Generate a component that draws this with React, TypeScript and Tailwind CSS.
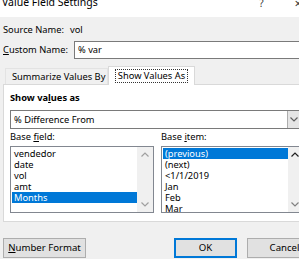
import React from "react";

const Up = ({ c = "#a0a0a0" }: { c?: string }) => (
  <svg width="8" height="5" viewBox="0 0 8 5">
    <path d="M0.5 4.5 L4 1 L7.5 4.5" fill="none" stroke={c} strokeWidth="1.2" />
  </svg>
);

const Down = ({ c = "#a0a0a0" }: { c?: string }) => (
  <svg width="8" height="5" viewBox="0 0 8 5">
    <path d="M0.5 0.5 L4 4 L7.5 0.5" fill="none" stroke={c} strokeWidth="1.2" />
  </svg>
);

const Item = ({ text, sel }: { text: string; sel?: boolean }) => (
  <div
    className={
      "h-[11px] leading-[11px] pl-[2px] " +
      (sel ? "bg-[#0078d7] text-white" : "text-black")
    }
  >
    {text}
  </div>
);

export default function App() {
  const fields = ["vendedor", "date", "vol", "amt", "Months"];
  const items = ["(previous)", "(next)", "<1/1/2019", "Jan", "Feb", "Mar"];

  return (
    <div className="w-[299px] h-[259px] overflow-hidden bg-[#f0f0f0] text-[9.3px] text-black whitespace-nowrap font-['Noto_Sans',sans-serif]">
      {/* title bar */}
      <div className="h-[17px] bg-white flex items-start overflow-hidden">
        <span className="ml-[2px] -mt-[4px] text-[10.5px] leading-[12px]">
          Value Field Settings
        </span>
        <div className="ml-auto flex items-start -mt-[3px] -mr-[3px]">
          <span className="text-[10px] leading-[12px] text-[#333]">?</span>
          <span className="ml-[31px] text-[13px] leading-[12px] text-[#333]">×</span>
        </div>
      </div>

      {/* source name */}
      <div className="h-[24px] pt-[2px] flex items-center pl-[3px]">
        <span className="w-[67px]">Source Name:</span>
        <span>vol</span>
      </div>

      {/* custom name */}
      <div className="h-[18px] flex items-center pl-[3px] overflow-hidden">
        <span className="w-[71px] shrink-0">
          <span className="underline">C</span>ustom Name:
        </span>
        <div className="h-[18px] w-[240px] shrink-0 bg-white border border-[#7a7a7a] flex items-center pl-[3px]">
          % var
        </div>
      </div>

      {/* tabs */}
      <div className="mt-[7px] h-[18px] flex items-end pl-[5px] relative z-10">
        <div className="h-[16px] w-[103px] border border-b-0 border-[#e3e3e3] bg-[#f0f0f0] flex items-center pl-[6px]">
          Summarize Values By
        </div>
        <div className="h-[19px] -mb-[1px] w-[87px] border border-b-0 border-[#d9d9d9] bg-white flex items-center justify-center">
          <span className="outline-1 outline-dotted outline-[#333] px-[2px] leading-[12px]">
            Show Values As
          </span>
        </div>
      </div>

      {/* panel */}
      <div className="ml-[3px] -mr-[10px] h-[138px] border border-[#d9d9d9] bg-white pl-[6px] pt-[7px]">
        <div className="h-[12px] leading-[12px] font-bold">
          Show va<span className="underline">l</span>ues as
        </div>
        <div className="mt-[6px] h-[19px] w-[290px] border border-[#7a7a7a] bg-white flex items-center">
          <span className="pl-[3px] flex-1">% Difference From</span>
          <div className="w-[12px] h-full bg-[#e5e5e5] border-l border-[#adadad] flex items-center justify-center">
            <Down c="#606060" />
          </div>
        </div>

        <div className="mt-[2px] flex gap-[7px]">
          <div className="w-[144px] shrink-0">
            <div className="h-[12px] leading-[12px]">
              Base <span className="underline">f</span>ield:
            </div>
            <div className="mt-[3px] h-[67px] border border-[#828790] bg-white flex pt-[1px] pl-[1px]">
              <div className="flex-1">
                {fields.map((f) => (
                  <Item key={f} text={f} sel={f === "Months"} />
                ))}
              </div>
              <div className="w-[16px] -mt-[1px] bg-[#f0f0f0] flex flex-col items-center justify-between py-[5px]">
                <Up />
                <Down />
              </div>
            </div>
          </div>
          <div className="w-[150px] shrink-0">
            <div className="h-[12px] leading-[12px]">
              Base <span className="underline">i</span>tem:
            </div>
            <div className="mt-[3px] h-[67px] border border-[#828790] bg-white flex pt-[1px] pl-[1px] overflow-hidden">
              <div className="w-[125px]">
                {items.map((f) => (
                  <Item key={f} text={f} sel={f === "(previous)"} />
                ))}
              </div>
              <div className="flex-1 -mt-[1px] bg-[#f0f0f0] flex flex-col items-start pl-[3px] justify-between py-[5px]">
                <Up c="#202020" />
                <Down c="#808080" />
              </div>
            </div>
          </div>
        </div>
      </div>

      {/* buttons */}
      <div className="mt-[16px] flex items-center pl-[3px] overflow-hidden text-[9.6px]">
        <div className="h-[20px] w-[83px] shrink-0 bg-[#e1e1e1] border border-[#adadad] flex items-center justify-center">
          <span>
            <span className="underline">N</span>umber Format
          </span>
        </div>
        <div className="ml-[88px] h-[20px] w-[63px] shrink-0 bg-[#e1e1e1] border-2 border-[#0078d7] flex items-center justify-center">
          OK
        </div>
        <div className="ml-[10px] h-[20px] w-[75px] shrink-0 bg-[#e1e1e1] border border-[#adadad] flex items-center justify-center">
          Cancel
        </div>
      </div>
    </div>
  );
}
